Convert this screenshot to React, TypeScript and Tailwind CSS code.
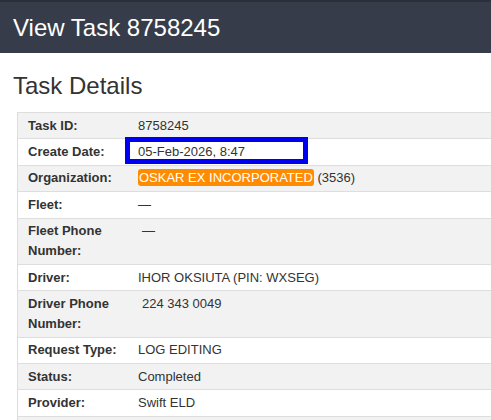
import React from "react";

type Row = { label: React.ReactNode; value: React.ReactNode };

const rows: Row[] = [
  { label: "Task ID:", value: "8758245" },
  {
    label: "Create Date:",
    value: <span>05-Feb-2026, 8:47</span>,
  },
  {
    label: "Organization:",
    value: (
      <>
        <span className="rounded-[3px] bg-[#ff8c00] px-px py-[1px] text-white">OSKAR EX INCORPORATED</span> (3536)
      </>
    ),
  },
  { label: "Fleet:", value: "—" },
  { label: <>Fleet Phone<br />Number:</>, value: <span className="pl-1">—</span> },
  { label: "Driver:", value: "IHOR OKSIUTA (PIN: WXSEG)" },
  { label: <>Driver Phone<br />Number:</>, value: <span className="pl-1">224 343 0049</span> },
  { label: "Request Type:", value: "LOG EDITING" },
  { label: "Status:", value: "Completed" },
  { label: "Provider:", value: "Swift ELD" },
  { label: "", value: "" },
];

export default function App() {
  return (
    <div className="h-[420px] w-[491px] overflow-hidden bg-white font-['Liberation_Sans',Arial,sans-serif] text-[#333]">
      <div className="h-[2px] bg-[#2b303b]" />
      <div className="flex h-[51px] items-center bg-[#363c49] px-[13px]">
        <h1 className="text-[24px] leading-none text-white">View Task 8758245</h1>
      </div>
      <h2 className="px-[13px] pt-[19px] text-[24px] leading-[28px] text-[#333]">Task Details</h2>
      <div className="relative ml-[17px] mt-[12px] w-[520px] border-l border-[#ddd]">
        <table className="w-full border-collapse text-[13px] leading-[20px]">
          <tbody>
            {rows.map((r, i) => (
              <tr key={i} className={i % 2 === 0 ? "bg-[#f2f2f2]" : "bg-white"}>
                <td className="w-[110px] border-t border-[#dedede] py-[2.7px] pl-[10px] align-top font-bold text-[#333]">
                  {r.label}
                </td>
                <td className="border-t border-[#dedede] py-[2.7px] pl-[10px] align-top text-[#333]">
                  {r.value}
                </td>
              </tr>
            ))}
          </tbody>
        </table>
        <div className="pointer-events-none absolute left-[107px] top-[25px] h-[27px] w-[183px] border-[5px] border-[#0000f0]" />
      </div>
    </div>
  );
}
